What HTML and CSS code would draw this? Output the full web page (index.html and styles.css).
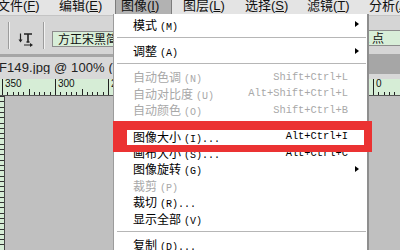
FILE: index.html
```html
<!DOCTYPE html>
<html>
  <head>
    <meta charset="utf-8">
    <title>图像菜单</title>
    <link rel="stylesheet" href="styles.css">
  </head>
  <body>
    <div class="app">
      <div class="menubar">
        <div class="mb">文件(<u>F</u>)</div>
        <div class="mb">编辑(<u>E</u>)</div>
        <div class="mb on">图像(<u>I</u>)</div>
        <div class="mb">图层(<u>L</u>)</div>
        <div class="mb">选择(<u>S</u>)</div>
        <div class="mb">滤镜(<u>T</u>)</div>
        <div class="mb">分析(<u>A</u>)</div>
      </div>
      <div class="opts">
        <div class="groove first"></div>
        <div class="tool">
          <svg width="16" height="16" viewBox="0 0 16 16">
            <path d="M2.5 2.5v7" stroke="#222" stroke-width="1.2" fill="none"/>
            <path d="M0.5 8.5l2 3 2-3z" fill="#222"/>
            <path d="M6 3h8M10 3v8M8.5 11h3" stroke="#222" stroke-width="1.6" fill="none"/>
            <path d="M6 14h6.5" stroke="#222" stroke-width="1" fill="none"/>
            <path d="M12 12l3 2-3 2z" fill="#222"/>
          </svg>
        </div>
        <div class="groove"></div>
        <div class="field font">方正宋黑简体</div>
        <div class="field size">12 点</div>
      </div>
      <div class="tabs">
        <div class="tab">F149.jpg @ 100% (说明)</div>
      </div>
      <div class="ruler">
        <div class="seg">350</div>
        <div class="seg">300</div>
        <div class="seg">250</div>
        <div class="seg">200</div>
        <div class="seg">150</div>
        <div class="seg">100</div>
        <div class="seg">50</div>
        <div class="seg">0</div>
      </div>
      <div class="work">
        <div class="vruler"></div>
        <div class="canvas"></div>
      </div>
    </div>

    <div class="menu">
      <div class="item sub"><span class="label">模式<span class="mn">(M)</span></span></div>
      <div class="hr"></div>
      <div class="item sub"><span class="label">调整<span class="mn">(A)</span></span></div>
      <div class="hr"></div>
      <div class="item off"><span class="label">自动色调<span class="mn">(N)</span></span><span class="key">Shift+Ctrl+L</span></div>
      <div class="item off"><span class="label">自动对比度<span class="mn">(U)</span></span><span class="key">Alt+Shift+Ctrl+L</span></div>
      <div class="item off"><span class="label">自动颜色<span class="mn">(O)</span></span><span class="key">Shift+Ctrl+B</span></div>
      <div class="hr"></div>
      <div class="item"><span class="label">图像大小<span class="mn">(I)...</span></span><span class="key">Alt+Ctrl+I</span></div>
      <div class="item"><span class="label">画布大小<span class="mn">(S)...</span></span><span class="key">Alt+Ctrl+C</span></div>
      <div class="item sub"><span class="label">图像旋转<span class="mn">(G)</span></span></div>
      <div class="item off"><span class="label">裁剪<span class="mn">(P)</span></span></div>
      <div class="item"><span class="label">裁切<span class="mn">(R)...</span></span></div>
      <div class="item"><span class="label">显示全部<span class="mn">(V)</span></span></div>
      <div class="hr"></div>
      <div class="item"><span class="label">复制<span class="mn">(D)...</span></span></div>
      <div class="mark"></div>
    </div>
  </body>
</html>
```

FILE: styles.css
```css
body {
  margin: 0;
  width: 400px;
  height: 250px;
  overflow: hidden;
  position: relative;
  font-family: "Liberation Sans", "Noto Sans CJK SC", sans-serif;
  color: #111;
}
.app {
  display: flex;
  flex-direction: column;
  height: 250px;
}

/* menu bar */
.menubar {
  display: flex;
  height: 15px;
  margin-left: -9px;
  background: #e4e4e4;
  font-size: 13px;
  line-height: 14px;
}
.mb {
  width: 57px;
  flex: none;
  margin-right: 5px;
  padding-left: 6px;
  box-sizing: border-box;
  white-space: nowrap;
  margin-top: -2px;
  padding-top: 1px;
}
.mb.on {
  background: #b2b2b2;
  border-left: 1px solid #7c7c7c;
  border-right: 1px solid #7c7c7c;
  padding-left: 5px;
}

/* options bar */
.opts {
  display: flex;
  align-items: flex-start;
  height: 39px;
  padding-left: 8px;
  background: #d5d5d5;
  border-top: 1px solid #c4c4c4;
  box-sizing: border-box;
}
.groove {
  width: 1px;
  height: 27px;
  margin-top: 6px;
  background: #9c9c9c;
  border-right: 1px solid #f2f2f2;
}
.tool {
  width: 16px;
  height: 16px;
  margin: 15px 0 0 8px;
}
.tool + .groove {
  margin-left: 9px;
}
.field {
  height: 16px;
  margin-top: 15px;
  background: #d8eed8;
  border: 1px solid #8c8c8c;
  box-sizing: border-box;
  font-family: "Noto Sans CJK SC", sans-serif;
  font-size: 12px;
  line-height: 14px;
  white-space: nowrap;
  overflow: hidden;
}
.font {
  width: 62px;
  margin-left: 7px;
  padding-left: 5px;
}
.size {
  width: 48px;
  margin-left: auto;
  margin-top: 14px;
  padding-left: 3px;
  border-right: none;
}

/* document tab */
.tabs {
  height: 25px;
  background: #a6a6a6;
  border-bottom: 5px solid #d8d8d8;
  box-sizing: border-box;
  padding-top: 3px;
}
.tab {
  width: 116px;
  height: 17px;
  margin-left: -1px;
  background: #d8d8d8;
  font-size: 13px;
  letter-spacing: 0.1px;
  line-height: 22px;
  color: #222;
  white-space: nowrap;
  overflow: hidden;
}

/* rulers */
.ruler {
  display: flex;
  height: 17px;
  padding-left: 2px;
  background:
    repeating-linear-gradient(to right, #222 0 1px, transparent 1px 26.5px) left bottom / 100% 6px no-repeat,
    repeating-linear-gradient(to right, #222 0 1px, transparent 1px 5.3px) left bottom / 100% 3px no-repeat,
    #d6edd6;
  background-origin: content-box;
  border-bottom: 1px solid #555;
  box-sizing: border-box;
}
.seg {
  width: 53px;
  flex: none;
  box-sizing: border-box;
  border-left: 1px solid #222;
  padding-left: 2px;
  font-size: 10px;
  line-height: 10px;
  color: #111;
}
.work {
  flex: 1;
  display: flex;
}
.vruler {
  width: 4px;
  background:
    repeating-linear-gradient(to bottom, #333 0 1px, transparent 1px 5.3px),
    #d6edd6;
  border-right: 1px solid #444;
}
.canvas {
  flex: 1;
  background: #c0c0c0;
}

/* dropdown */
.menu {
  position: absolute;
  left: 113px;
  top: 14px;
  width: 253px;
  height: 240px;
  padding-top: 2px;
  background: #fff;
  border-left: 1px solid #9c9c9c;
  box-shadow: 2px 0 0 #8e8e8e;
  font-family: "Noto Sans CJK SC", sans-serif;
  font-size: 12px;
  color: #000;
}
.item {
  display: flex;
  align-items: center;
  height: 16.4px;
  padding: 0 8px 0 19px;
  white-space: nowrap;
}
.label {
  flex: 1;
}
.mn {
  margin-left: 3px;
  font-family: "Liberation Mono", monospace;
  font-size: 10px;
}
.key {
  margin-right: 11px;
  font-family: "Liberation Mono", monospace;
  font-size: 10.4px;
}
.sub::after {
  content: "";
  border-left: 4px solid #000;
  border-top: 3.5px solid transparent;
  border-bottom: 3.5px solid transparent;
}
.off {
  color: #a8a8a8;
}
.hr {
  height: 10px;
  display: flex;
  align-items: center;
}
.hr::before {
  content: "";
  flex: 1;
  height: 1px;
  margin: 0 1px 0 3px;
  background: #b6b6b6;
}
.mark {
  position: absolute;
  left: -1px;
  top: 107px;
  width: 259px;
  height: 31px;
  box-sizing: border-box;
  border-style: solid;
  border-color: #eb3232;
  border-width: 9px 8px 7px 14px;
}
```
